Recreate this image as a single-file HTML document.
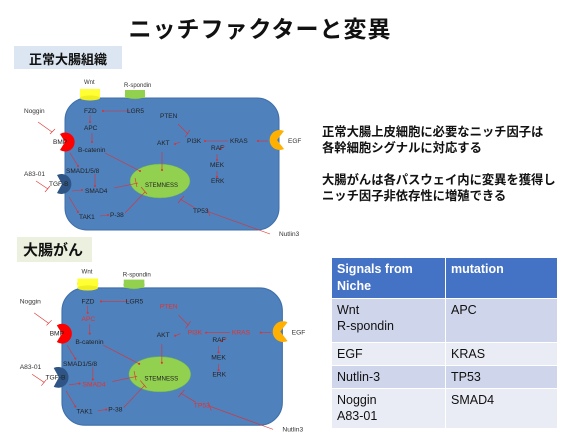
<!DOCTYPE html>
<html><head><meta charset="utf-8">
<style>
*{margin:0;padding:0;box-sizing:border-box}
body{width:577px;height:432px;background:#fff;position:relative;overflow:hidden;font-family:"Liberation Sans","Noto Sans CJK JP",sans-serif}
.t{position:absolute;left:0;width:520px;text-align:center;top:10px;font-size:23px;font-weight:bold;letter-spacing:1px;color:#111}
.lab{position:absolute;font-weight:bold;color:#111}
.txt{position:absolute;left:322px;font-size:12.3px;font-weight:bold;line-height:16px;color:#111}
table{position:absolute;left:331px;top:257px;width:227px;border-collapse:collapse;font-size:12.5px;color:#111}
td{vertical-align:top;padding:3px 5px;border:1.5px solid #fff;line-height:16px}
th{background:#4472c4;color:#fff;text-align:left;vertical-align:top;padding:3px 5px;line-height:17px;border:1.5px solid #fff;font-size:12.5px}
.a td{background:#cfd5ea}.b td{background:#e9ebf5}
svg{position:absolute;left:0;top:0}
</style></head><body>
<div class="t">ニッチファクターと変異</div>
<div class="lab" style="left:14px;top:46px;width:108px;height:23px;background:#dce6f2;font-size:13px;padding:3px 0 0 15px">正常大腸組織</div>
<div class="lab" style="left:17px;top:237px;width:75px;height:25px;background:#ebf1de;font-size:15px;padding:2px 0 0 6px">大腸がん</div>
<div class="txt" style="top:124px">正常大腸上皮細胞に必要なニッチ因子は<br>各幹細胞シグナルに対応する</div>
<div class="txt" style="top:172px">大腸がんは各パスウェイ内に変異を獲得し<br>ニッチ因子非依存性に増殖できる</div>
<table>
<tr><th style="width:114px;height:39px">Signals from Niche</th><th>mutation</th></tr>
<tr class="a"><td style="height:44px">Wnt<br>R-spondin</td><td>APC</td></tr>
<tr class="b"><td style="height:23px">EGF</td><td>KRAS</td></tr>
<tr class="a"><td style="height:23px">Nutlin-3</td><td>TP53</td></tr>
<tr class="b"><td style="height:40px">Noggin<br>A83-01</td><td>SMAD4</td></tr>
</table>
<svg width="577" height="432" font-family="Liberation Sans,sans-serif" font-size="6.5">
<defs>
<g id="cell">
<rect x="65" y="98" width="214" height="132" rx="22" fill="#4f81bd" stroke="#3f6fa8"/>
<ellipse cx="90" cy="94" rx="10" ry="4" fill="#ffff33" stroke="#aaa" stroke-width=".5"/>
<rect x="80" y="89" width="20" height="9" fill="#ffff33"/>
<ellipse cx="90" cy="98" rx="10" ry="2.5" fill="#eeee22"/>
<ellipse cx="135" cy="95" rx="10" ry="4" fill="#92d050" stroke="#6a6" stroke-width=".5"/>
<rect x="125" y="90" width="20" height="8" fill="#92d050"/>
<ellipse cx="160" cy="181" rx="30" ry="17" fill="#92d050" stroke="#6a6" stroke-width=".5"/>
<path d="M60 134 A9.5 9.5 0 1 1 60 150 L65 142Z" fill="#f00"/>
<path d="M57 175 A10 10 0 1 1 57 193 L62 184Z" fill="#2e5585"/>
<path d="M284 131 A10 10 0 1 0 284 149 L277 140Z" fill="#ffb000"/>
<g stroke="#e03030" stroke-width=".6" fill="none">
<path d="M130 111 L103 111"/><path d="M90 115 V122"/><path d="M92 133 V142"/>
<path d="M70 153 L78 166"/><path d="M95 174 V186"/><path d="M72 191 L82 190"/>
<path d="M69 197 L78 212"/><path d="M100 216 L108 215"/><path d="M125 213 L145 192"/><path d="M141 187 L147 194"/>
<path d="M114 188 L138 183"/><path d="M135 178 L137 187"/>
<path d="M105 153 L140 171"/><path d="M162 152 V170"/>
<path d="M178 124 L188 134"/><path d="M185 137 L190 130"/>
<path d="M180 142 L175 144"/><path d="M228 141 L205 141"/><path d="M225 146 L220 149"/><path d="M217 154 V160"/><path d="M217 171 V177"/>
<path d="M268 141 L258 141"/>
<path d="M195 208 L180 199"/><path d="M178 203 L184 196"/>
<path d="M209 212 L270 234"/><path d="M207 208 L210 216"/>
<path d="M38 122 L52 132"/><path d="M50 134 L55 129"/>
<path d="M36 181 L48 189"/><path d="M45 192 L50 186"/>
</g>
<g fill="#e03030"><circle cx="103" cy="111" r="1"/><circle cx="90" cy="122" r="1"/><circle cx="92" cy="142" r="1"/><circle cx="78" cy="166" r="1"/><circle cx="95" cy="186" r="1"/><circle cx="82" cy="190" r="1"/><circle cx="78" cy="212" r="1"/><circle cx="108" cy="215" r="1"/><circle cx="140" cy="171" r="1"/><circle cx="162" cy="170" r="1"/><circle cx="175" cy="144" r="1"/><circle cx="205" cy="141" r="1"/><circle cx="220" cy="149" r="1"/><circle cx="217" cy="160" r="1"/><circle cx="217" cy="177" r="1"/><circle cx="258" cy="141" r="1"/></g>
<g fill="#222">
<text x="84" y="84" font-size="6" fill="#333">Wnt</text>
<text x="124" y="87" font-size="6" fill="#333">R-spondin</text>
<text x="84" y="113">FZD</text><text x="127" y="113">LGR5</text>
<text x="24" y="113" fill="#333">Noggin</text>
<text x="24" y="176" fill="#333">A83-01</text>
<text x="145" y="187" font-size="6">STEMNESS</text>
<text x="157" y="145">AKT</text>
<text x="211" y="150">RAF</text><text x="210" y="167">MEK</text><text x="211" y="183">ERK</text>
<text x="288" y="143" fill="#333">EGF</text>
<text x="78" y="152">B-catenin</text>
<text x="66" y="173">SMAD1/5/8</text>
<text x="79" y="219">TAK1</text><text x="110" y="217">P-38</text>
<text x="279" y="236" fill="#333">Nutlin3</text>
<text x="53" y="144">BMP</text><text x="49" y="186">TGF-B</text>
</g>
</g>
<g id="n" fill="#222"><text x="160" y="118">PTEN</text><text x="84" y="130">APC</text><text x="187" y="143">PI3K</text><text x="230" y="143">KRAS</text><text x="85" y="193">SMAD4</text><text x="193" y="213">TP53</text></g>
<g id="m" fill="#e8302a"><text x="160" y="118">PTEN</text><text x="84" y="130">APC</text><text x="187" y="143">PI3K</text><text x="230" y="143">KRAS</text><text x="85" y="193">SMAD4</text><text x="193" y="213">TP53</text></g>
</defs>
<use href="#cell"/><use href="#n"/>
<g transform="translate(-5,186) scale(1.03,1.04)"><use href="#cell"/><use href="#m"/></g>
</svg>
</body></html>
